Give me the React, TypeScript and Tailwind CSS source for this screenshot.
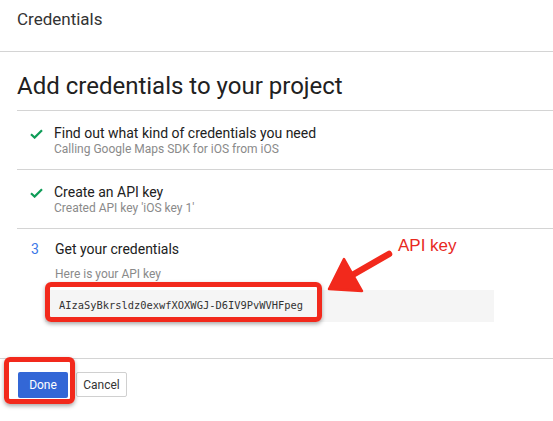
import React from 'react';

function Check() {
  return (
    <svg width="13" height="10" viewBox="0 0 13 10" className="block">
      <path d="M1 5.2 L4.6 8.6 L12 1.2" fill="none" stroke="#0f9d58" strokeWidth="2.2" />
    </svg>
  );
}

const steps = [
  { title: 'Find out what kind of credentials you need', sub: 'Calling Google Maps SDK for iOS from iOS' },
  { title: 'Create an API key', sub: "Created API key 'iOS key 1'" },
];

export default function App() {
  return (
    <div className="relative w-[553px] h-[421px] overflow-hidden bg-white font-['Roboto',sans-serif] text-[#212121] flex flex-col">
      <div className="h-[52px] shrink-0 border-b border-[#d4d4d4] pl-[17px] pt-[8px] text-[17px] leading-[22px] text-[#333]">
        Credentials
      </div>

      <div className="flex-1 pl-[17px]">
        <h1 className="pt-[20px] pb-[10px] border-b border-[#d4d4d4] text-[24px] leading-[28px] font-normal">
          Add credentials to your project
        </h1>

        {steps.map((s, i) => (
          <div key={i} className="flex border-b border-[#d4d4d4] pt-[13px] pb-[13px]">
            <div className="w-[37px] pl-[13px] pt-[5px]">
              <Check />
            </div>
            <div>
              <div className="text-[14px] leading-[18px]">{s.title}</div>
              <div className="text-[12px] leading-[14px] text-[#8a8a8a]">{s.sub}</div>
            </div>
          </div>
        ))}

        <div className="pt-[11px]">
          <div className="flex text-[14px] leading-[18px]">
            <span className="w-[38px] pl-[14px] text-[#3b78e7]">3</span>
            <span>Get your credentials</span>
          </div>
          <div className="pl-[38px] pt-[8px] text-[12px] leading-[16px] text-[#8a8a8a]">Here is your API key</div>
          <div className="ml-[28px] mt-[8px] w-[449px] h-[32px] bg-[#f5f5f5] pl-[14px] flex items-center font-['DejaVu_Sans_Mono',monospace] text-[10.4px] text-[#333]">
            AIzaSyBkrsldz0exwfXOXWGJ-D6IV9PvWVHFpeg
          </div>
        </div>
      </div>

      <div className="h-[63px] shrink-0 border-t border-[#d4d4d4] flex items-start gap-[8px] pl-[18px] pt-[13px] text-[12px]">
        <button className="h-[26px] w-[50px] rounded-[2px] bg-[#3367d6] text-white">Done</button>
        <button className="h-[25px] w-[51px] rounded-[2px] border border-[#d0d0d0] bg-white text-[#333]">Cancel</button>
      </div>

      {/* annotations */}
      <div className="absolute left-[45px] top-[282px] w-[277px] h-[40px] rounded-[6px] border-[5px] border-[#f2291c] shadow-[0_2px_4px_rgba(0,0,0,0.35)]" />
      <div className="absolute left-[4px] top-[357px] w-[71px] h-[47px] rounded-[6px] border-[5px] border-[#f2291c] shadow-[0_2px_4px_rgba(0,0,0,0.35)]" />
      <svg className="absolute left-0 top-0" width="553" height="421" viewBox="0 0 553 421">
        <path d="M389 254 L342 281" stroke="#f2291c" strokeWidth="6.5" strokeLinecap="round" />
        <path d="M329 289 L344 259 L362 291 Z" fill="#f2291c" stroke="#f2291c" strokeWidth="2.5" strokeLinejoin="round" />
      </svg>
      <div className="absolute left-[398px] top-[236px] font-['Liberation_Sans',sans-serif] text-[17px] leading-[20px] text-[#e8281e]">
        API key
      </div>
    </div>
  );
}
